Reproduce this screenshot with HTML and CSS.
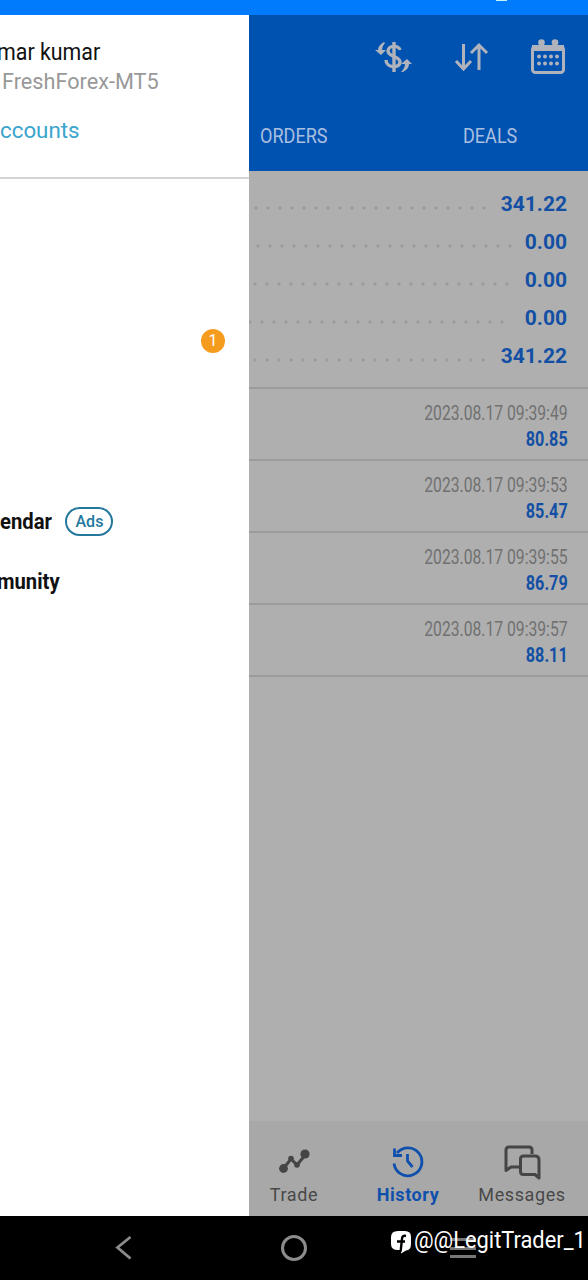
FILE: index.html
```
<!DOCTYPE html>
<html lang="en">
    <head>
        <meta charset="UTF-8">
        <title>History</title>
        <link rel="stylesheet" href="styles.css">
    </head>
    <body>
        <div class="status-bar"><span class="status-icon"></span></div>

        <div class="main">
            <aside class="drawer">
                <div class="account">
                    <div class="account-name"><span>mar kumar</span></div>
                    <div class="account-server"><span>FreshForex-MT5</span></div>
                    <div class="account-link"><span>ccounts</span></div>
                </div>
                <div class="menu">
                    <div class="menu-item menu-messages"><span class="count">1</span></div>
                    <div class="menu-item menu-calendar"><span class="menu-label">endar</span><span class="ads">Ads</span></div>
                    <div class="menu-item menu-community"><span class="menu-label">munity</span></div>
                </div>
            </aside>

            <div class="history">
                <header class="header">
                    <div class="toolbar">
                        <svg width="40" height="40" viewBox="0 0 40 40">
                            <g fill="none" stroke="#b0b3bb" stroke-width="3.4">
                                <path d="M20 5v30"/>
                                <path d="M26 13c-1-5-12-5-12 1 0 6 12 5 12 11 0 7-14 6-14-2"/>
                            </g>
                            <path d="M10 5C6 7 4 10 4 13H1l6 5 5-5H8q0-4 3-7zM29 35c4-2 6-5 6-8h3l-5-5-6 5h4q0 4-4 8z" fill="#b0b3bb"/>
                        </svg>
                        <svg width="40" height="40" viewBox="0 0 40 40">
                            <path d="M12.500 7v25M5 24l7.500 8 7.500-8M28 33V8M20 16l8-8 8 8" fill="none" stroke="#b0b3bb" stroke-width="3"/>
                        </svg>
                        <svg width="40" height="40" viewBox="0 0 40 40">
                            <rect x="4.5" y="9.5" width="31" height="26" rx="3" fill="none" stroke="#b0b3bb" stroke-width="3"/>
                            <path d="M4 8h5q1 3 5 3t5-3h3q1 3 5 3t5-3h4v6H4z" fill="#b0b3bb"/>
                            <g fill="#b0b3bb">
                                <circle cx="13.5" cy="5.500" r="3.3"/>
                                <circle cx="27" cy="5.500" r="3.3"/>
                                <circle cx="11" cy="19.500" r="2"/>
                                <circle cx="17" cy="19.500" r="2"/>
                                <circle cx="23" cy="19.500" r="2"/>
                                <circle cx="29" cy="19.500" r="2"/>
                                <circle cx="11" cy="26.5" r="2"/>
                                <circle cx="17" cy="26.5" r="2"/>
                                <circle cx="23" cy="26.5" r="2"/>
                                <circle cx="29" cy="26.5" r="2"/>
                            </g>
                        </svg>
                    </div>
                    <div class="tabs">
                        <div class="tab tab-orders"><span>ORDERS</span></div>
                        <div class="tab tab-deals"><span>DEALS</span></div>
                    </div>
                </header>

                <div class="summary">
                    <div class="summary-row"><i class="dots"></i><b>341.22</b></div>
                    <div class="summary-row"><i class="dots dots-2"></i><b>0.00</b></div>
                    <div class="summary-row"><i class="dots dots-3"></i><b>0.00</b></div>
                    <div class="summary-row"><i class="dots dots-4"></i><b>0.00</b></div>
                    <div class="summary-row"><i class="dots dots-5"></i><b>341.22</b></div>
                </div>

                <div class="deal"><span class="time">2023.08.17 09:39:49</span><span class="profit">80.85</span></div>
                <div class="deal"><span class="time">2023.08.17 09:39:53</span><span class="profit">85.47</span></div>
                <div class="deal"><span class="time">2023.08.17 09:39:55</span><span class="profit">86.79</span></div>
                <div class="deal"><span class="time">2023.08.17 09:39:57</span><span class="profit">88.11</span></div>

                <nav class="bottom-nav">
                    <div class="nav-item">
                        <svg width="40" height="40" viewBox="0 0 40 40">
                            <path d="M9 28l8-10 6 6 9-11" fill="none" stroke="#454545" stroke-width="3"/>
                            <g fill="#454545">
                                <circle cx="9.5" cy="27.5" r="4.4"/>
                                <circle cx="17" cy="17.5" r="2.8"/>
                                <circle cx="23" cy="24" r="2.8"/>
                                <circle cx="31" cy="13" r="4.6"/>
                            </g>
                        </svg>
                        <span>Trade</span>
                    </div>
                    <div class="nav-item active">
                        <svg width="40" height="40" viewBox="0 0 40 40">
                            <path d="M6 22.500A14 14 0 1 0 9 12M6.500 7.500V14.500H14M19.500 13v7l5 6" fill="none" stroke="#0f50ad" stroke-width="2.800"/>
                        </svg>
                        <span>History</span>
                    </div>
                    <div class="nav-item">
                        <svg width="40" height="40" viewBox="0 0 40 40">
                            <g fill="none" stroke="#454545" stroke-width="3" stroke-linejoin="round">
                                <path d="M30 13V9q0-3-3-3H7Q4 6 4 9v20.500l5-3.500h8"/>
                                <path d="M21.500 15H33q4 0 4 4v18l-4-3.500H21.500q-3 0-3-3V18q0-3 3-3z"/>
                            </g>
                        </svg>
                        <span>Messages</span>
                    </div>
                </nav>
            </div>
        </div>

        <div class="system-bar">
            <svg class="back" width="18" height="26" viewBox="0 0 18 26"><path d="M15.500 2L2.500 12.500 15.500 23.500" fill="none" stroke="#8c8c8c" stroke-width="2.800"/></svg>
            <span class="home"></span>
            <span class="recents"></span>
            <div class="watermark">
                <svg width="21" height="23" viewBox="0 0 21 23">
                    <path d="M7 0h7q6 0 6 6v7q0 6-5 6.500l-5 3V19H7q-7 0-7-6V6q0-6 7-6z" fill="#fff"/>
                    <path d="M15 5q-4-1-4 3l-1 9q0 3-1 4M6 10.500h8" fill="none" stroke="#000" stroke-width="2.400"/>
                </svg>
                <span>@@LegitTrader_1</span>
            </div>
        </div>
    </body>
</html>
```
FILE: styles.css
```
body {
    margin: 0;
    width: 588px;
    height: 1280px;
    display: flex;
    flex-direction: column;
    overflow: hidden;
    font-family: Roboto, 'Liberation Sans', sans-serif;
    background: #000;
}

span, b {
    white-space: nowrap;
}

.status-bar {
    height: 15px;
    background: #007bfd;
    display: flex;
    justify-content: flex-end;
}

.status-icon {
    width: 11px;
    height: 1px;
    margin-right: 81px;
    background: #c5f3fa;
}

.main {
    height: 1201px;
    display: flex;
}

/* drawer */
.drawer {
    width: 249px;
    background: #fff;
    overflow: hidden;
}

.account {
    height: 164px;
    box-sizing: border-box;
    border-bottom: 2px solid #d4d4d4;
    padding-top: 23px;
}

.account span {
    display: inline-block;
    transform-origin: left;
}

.account-name {
    height: 29px;
    line-height: 29px;
    font-size: 23px;
    color: #111;
}

.account-name span {
    margin-left: -3px;
    transform: scaleX(0.93);
}

.account-server {
    height: 29px;
    line-height: 29px;
    padding-left: 2px;
    font-size: 22px;
    color: #999;
}

.account-server span {
    transform: scaleX(0.985);
}

.account-link {
    margin-top: 20px;
    line-height: 29px;
    font-size: 22px;
    color: #3aa5cd;
}

.account-link span {
    transform: scaleX(1.015);
}

.menu {
    padding-top: 132px;
}

.menu-item {
    height: 60px;
    display: flex;
    align-items: center;
}

.menu-messages {
    justify-content: flex-end;
    padding-right: 24px;
    margin-bottom: 120px;
}

.menu-label {
    font-size: 22px;
    font-weight: bold;
    color: #111;
    transform: scaleX(0.92);
    transform-origin: left;
}

.menu-community .menu-label {
    margin-left: -3px;
}

.count {
    width: 24px;
    height: 24px;
    border-radius: 50%;
    background: #f59b1d;
    color: #fff;
    font-size: 16px;
    line-height: 24px;
    text-align: center;
}

.ads {
    box-sizing: border-box;
    width: 48px;
    height: 29px;
    margin-left: 9px;
    border: 2px solid #24789d;
    border-radius: 15px;
    color: #24789d;
    font-size: 16px;
    font-weight: 500;
    line-height: 25px;
    text-align: center;
}

/* history */
.history {
    width: 339px;
    display: flex;
    flex-direction: column;
    background: #afafaf;
}

.header {
    height: 156px;
    background: #0052b1;
}

.toolbar {
    height: 84px;
    padding-right: 20px;
    display: flex;
    justify-content: flex-end;
    align-items: center;
    gap: 37px;
}

.tabs {
    height: 72px;
    display: flex;
}

.tab {
    font-size: 21px;
    line-height: 74px;
    color: #a9bfe0;
}

.tab-orders {
    width: 202px;
    padding-left: 11px;
}

.tab-deals {
    padding-left: 1px;
}

.tab span {
    display: inline-block;
    transform: scaleX(0.86);
    transform-origin: left;
}

.summary {
    height: 218px;
    box-sizing: border-box;
    padding: 14px 21px 0 0;
    border-bottom: 2px solid #9b9b9b;
}

.summary-row {
    height: 38px;
    display: flex;
    justify-content: space-between;
    align-items: center;
    font-size: 21px;
    color: #134fa4;
}

.dots {
    width: 238px;
    height: 4px;
    margin-top: 7px;
    background: radial-gradient(circle at 50% 50%, #9b9b9b 1.2px, transparent 2px) 1px 0 / 12px 4px;
}

.dots-2 {
    width: 264px;
    background-position-x: 3px;
}

.dots-3 {
    width: 261px;
    background-position-x: 0;
}

.dots-4 {
    width: 256px;
    background-position-x: 7px;
}

.dots-5 {
    background-position-x: 0;
}

.deal {
    height: 72px;
    box-sizing: border-box;
    padding: 10px 20px 0 0;
    border-bottom: 2px solid #9b9b9b;
    display: flex;
    flex-direction: column;
    align-items: flex-end;
}

.time {
    font-size: 20px;
    line-height: 28px;
    color: #717171;
    transform: scaleX(0.785);
    transform-origin: right;
}

.profit {
    font-size: 20px;
    font-weight: bold;
    line-height: 24px;
    color: #134fa4;
    transform: scaleX(0.81);
    transform-origin: right;
}

.bottom-nav {
    height: 95px;
    margin-top: auto;
    background: #a8a8a8;
    display: flex;
    justify-content: flex-end;
    padding-right: 9px;
}

.nav-item {
    width: 114px;
    flex: none;
    padding-top: 20px;
    display: flex;
    flex-direction: column;
    align-items: center;
    font-size: 18px;
    line-height: 28px;
    letter-spacing: 0.6px;
    color: #484848;
}

.active {
    color: #0f50ad;
    font-weight: bold;
}

/* android buttons */
.system-bar {
    height: 64px;
    position: relative;
    background: #000;
    display: flex;
    align-items: center;
}

.back {
    margin-left: 115px;
}

.home {
    box-sizing: border-box;
    width: 26px;
    height: 26px;
    margin-left: 148px;
    border: 3px solid #8c8c8c;
    border-radius: 50%;
}

.recents {
    box-sizing: border-box;
    width: 26px;
    height: 20px;
    margin-left: 143px;
    border-top: 3px solid #777;
    border-bottom: 3px solid #777;
    background: linear-gradient(#777, #777) center / 100% 3px no-repeat;
}

.watermark {
    position: absolute;
    left: 391px;
    top: 9px;
    display: flex;
    align-items: center;
    gap: 2px;
    color: #fff;
    font-size: 24px;
    line-height: 30px;
}

.watermark svg {
    margin-top: 4px;
}

.watermark span {
    transform: scaleX(0.91);
    transform-origin: left;
}
```
